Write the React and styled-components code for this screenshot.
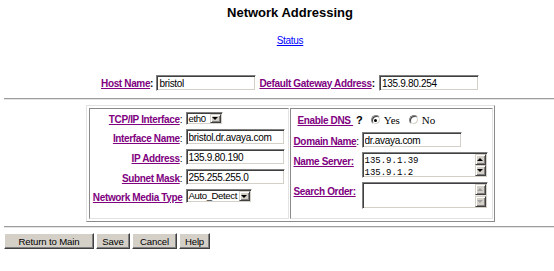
import React from 'react'
import styled, { createGlobalStyle } from 'styled-components'

const GlobalStyle = createGlobalStyle`
  html, body {
    margin: 0;
    padding: 0;
    background: #fff;
    overflow: hidden;
  }
  body {
    font-family: "Liberation Sans", Arial, sans-serif;
    color: #000;
  }
`

const Page = styled.div`
  width: 572px;
  margin-left: 4px;
  padding-top: 5px;
`

const Title = styled.h1`
  margin: 0;
  font-size: 13px;
  line-height: 15px;
  font-weight: bold;
  text-align: center;
`

const StatusLine = styled.div`
  margin-top: 15px;
  text-align: center;
  font-size: 10px;
  letter-spacing: -0.3px;
  line-height: 11px;
`

const BlueLink = styled.a`
  color: #0000ff;
  text-decoration: underline;
  cursor: pointer;
`

const HostRow = styled.div`
  margin-top: 29px;
  display: flex;
  justify-content: center;
  align-items: center;
  height: 16px;
`

const Label = styled.a`
  color: #800080;
  font-weight: bold;
  font-size: 10px;
  letter-spacing: -0.35px;
  text-decoration: underline;
  white-space: pre;
  cursor: pointer;
`

const Colon = styled.span`
  font-size: 10px;
  font-weight: ${props => props.$bold ? 'bold' : 'normal'};
`

const LabelCell = styled.div`
  justify-self: ${props => props.$right ? 'end' : 'start'};
  align-self: ${props => props.$top ? 'start' : 'center'};
  margin-top: ${props => props.$top ? '2px' : '0'};
  line-height: 11px;
  white-space: nowrap;
`

const Rule = styled.div`
  height: 0;
  border-top: 1px solid #9c9c9c;
  border-bottom: 1px solid #e4e4e4;
  margin-top: ${props => props.$top}px;
`

const TextInput = styled.input`
  box-sizing: border-box;
  width: ${props => props.$w}px;
  height: 16px;
  margin: 0 0 0 ${props => props.$ml || 0}px;
  padding: 0 2px;
  border: 1px solid;
  border-color: #808080 #ffffff #ffffff #808080;
  box-shadow: inset 1px 1px 0 #404040, inset -1px -1px 0 #d4d0c8;
  background: #fff;
  font-family: "Liberation Sans", Arial, sans-serif;
  font-size: 10px;
  letter-spacing: -0.3px;
  color: #000;
  outline: none;
`

const Panel = styled.div`
  display: flex;
  gap: 1px;
  width: fit-content;
  margin: 5px auto 0;
  padding: 2px 1px 2px 2px;
  border: 1px solid;
  border-color: #e2e2e2 #8a8a8a #8a8a8a #e2e2e2;
`

const Cell = styled.div`
  box-sizing: border-box;
  width: ${props => props.$w}px;
  height: 111px;
  padding: 3px 0 0 ${props => props.$pl || 0}px;
  border: 1px solid;
  border-color: #8a8a8a #e2e2e2 #e2e2e2 #8a8a8a;
`

const FieldGrid = styled.div`
  display: grid;
  grid-template-columns: ${props => props.$cols};
  grid-template-rows: ${props => props.$rows};
  column-gap: 3px;
  row-gap: 4px;
`

const SelectBox = styled.div`
  box-sizing: border-box;
  display: flex;
  align-items: stretch;
  width: ${props => props.$w}px;
  height: ${props => props.$h}px;
  align-self: center;
  border: 1px solid;
  border-color: #808080 #ffffff #ffffff #808080;
  box-shadow: inset 1px 1px 0 #404040, inset -1px -1px 0 #d4d0c8;
  padding: 1px;
  background: #fff;
`

const SelectText = styled.span`
  flex: 1;
  font-size: 9.6px;
  letter-spacing: -0.4px;
  line-height: ${props => props.$h - 4}px;
  padding-left: 1px;
  white-space: nowrap;
`

const ArrowButton = styled.span`
  box-sizing: border-box;
  width: 11px;
  display: flex;
  align-items: center;
  justify-content: center;
  background: #d4d0c8;
  border: 1px solid;
  border-color: #d4d0c8 #404040 #404040 #d4d0c8;
  box-shadow: inset 1px 1px 0 #ffffff, inset -1px -1px 0 #808080;
  flex: none;
`

const Triangle = styled.span`
  width: 0;
  height: 0;
  border-left: 3px solid transparent;
  border-right: 3px solid transparent;
  ${props => props.$up
    ? `border-bottom: 3px solid ${props.$off ? '#a0a0a0' : '#000'};`
    : `border-top: 3px solid ${props.$off ? '#a0a0a0' : '#000'};`}
`

const DnsRow = styled.div`
  grid-column: 1 / 3;
  display: flex;
  align-items: center;
  padding-left: 4px;
`

const Question = styled.span`
  font-weight: bold;
  font-size: 11px;
  margin-left: 3px;
`

const Radio = styled.span`
  position: relative;
  box-sizing: border-box;
  width: 10px;
  height: 10px;
  margin-left: ${props => props.$ml}px;
  border-radius: 50%;
  border: 1px solid;
  border-color: #808080 #ffffff #ffffff #808080;
  box-shadow: inset 1px 1px 0 #404040, inset -1px -1px 0 #d4d0c8;
  background: #fff;
  &::after {
    content: '';
    display: ${props => props.$on ? 'block' : 'none'};
    position: absolute;
    left: 2.5px;
    top: 2.5px;
    width: 3px;
    height: 3px;
    border-radius: 50%;
    background: #000;
  }
`

const RadioText = styled.span`
  font-family: "Liberation Serif", "Times New Roman", serif;
  font-size: 11px;
  margin-left: 3px;
`

const TextArea = styled.div`
  box-sizing: border-box;
  display: flex;
  width: 126px;
  height: ${props => props.$h}px;
  border: 1px solid;
  border-color: #808080 #ffffff #ffffff #808080;
  box-shadow: inset 1px 1px 0 #404040, inset -1px -1px 0 #d4d0c8;
  padding: 1px;
  background: #fff;
`

const AreaText = styled.div`
  flex: 1;
  padding: 1px 0 0 1px;
  font-family: "Liberation Mono", "Courier New", monospace;
  font-size: 9px;
  line-height: 12px;
  white-space: pre;
`

const ScrollBar = styled.div`
  width: 11px;
  display: flex;
  flex-direction: column;
  justify-content: space-between;
  background: #ece9e4;
`

const ScrollButton = styled(ArrowButton)`
  width: 11px;
  height: 11px;
`

const ButtonRow = styled.div`
  display: flex;
  gap: 2px;
  margin-top: 5px;
`

const Button = styled.button`
  box-sizing: border-box;
  width: ${props => props.$w}px;
  height: 16px;
  padding: 0;
  background: #d4d0c8;
  border: 1px solid;
  border-color: #ffffff #404040 #404040 #ffffff;
  box-shadow: inset -1px -1px 0 #808080;
  font-family: "Liberation Sans", Arial, sans-serif;
  font-size: 9.6px;
  letter-spacing: -0.15px;
  color: #000;
  cursor: pointer;
`

function Select ({ value, width, height }) {
  return (
    <SelectBox $w={width} $h={height}>
      <SelectText $h={height}>{value}</SelectText>
      <ArrowButton><Triangle /></ArrowButton>
    </SelectBox>
  )
}

function ScrollArea ({ lines, height, disabled }) {
  return (
    <TextArea $h={height}>
      <AreaText>{lines.join('\n')}</AreaText>
      <ScrollBar>
        <ScrollButton><Triangle $up $off={disabled} /></ScrollButton>
        <ScrollButton><Triangle $off={disabled} /></ScrollButton>
      </ScrollBar>
    </TextArea>
  )
}

export default function App () {
  return (
    <Page>
      <GlobalStyle />
      <Title>Network Addressing</Title>
      <StatusLine><BlueLink>Status</BlueLink></StatusLine>

      <HostRow>
        <Label>Host Name</Label><Colon $bold>:</Colon>
        <TextInput $w={100} $ml={3} defaultValue="bristol" />
        <Label style={{ marginLeft: 3 }}>Default Gateway Address</Label><Colon $bold>:</Colon>
        <TextInput $w={100} $ml={4} defaultValue="135.9.80.254" />
      </HostRow>

      <Rule $top={7} />

      <Panel>
        <Cell $w={200}>
          <FieldGrid $cols="93px 99px" $rows="13px 16px 16px 16px 14px">
            <LabelCell $right><Label>TCP/IP Interface</Label><Colon>:</Colon></LabelCell>
            <Select value="eth0" width={37} height={13} />
            <LabelCell $right><Label>Interface Name</Label><Colon>:</Colon></LabelCell>
            <TextInput $w={99} defaultValue="bristol.dr.avaya.com" />
            <LabelCell $right><Label>IP Address</Label><Colon>:</Colon></LabelCell>
            <TextInput $w={99} defaultValue="135.9.80.190" />
            <LabelCell $right><Label>Subnet Mask</Label><Colon>:</Colon></LabelCell>
            <TextInput $w={99} defaultValue="255.255.255.0" />
            <LabelCell $right><Label>Network Media Type</Label></LabelCell>
            <Select value="Auto_Detect" width={66} height={14} />
          </FieldGrid>
        </Cell>
        <Cell $w={203} $pl={3}>
          <FieldGrid $cols="65px 126px" $rows="16px 16px 26px 27px">
            <DnsRow>
              <Label>Enable DNS </Label>
              <Question>?</Question>
              <Radio $ml={8} $on />
              <RadioText>Yes</RadioText>
              <Radio $ml={9} />
              <RadioText>No</RadioText>
            </DnsRow>
            <LabelCell><Label>Domain Name</Label><Colon>:</Colon></LabelCell>
            <TextInput $w={100} defaultValue="dr.avaya.com" />
            <LabelCell $top><Label>Name Server:</Label></LabelCell>
            <ScrollArea lines={['135.9.1.39', '135.9.1.2']} height={26} />
            <LabelCell $top><Label>Search Order:</Label></LabelCell>
            <ScrollArea lines={[]} height={27} disabled />
          </FieldGrid>
        </Cell>
      </Panel>

      <Rule $top={4} />

      <ButtonRow>
        <Button $w={90}>Return to Main</Button>
        <Button $w={34}>Save</Button>
        <Button $w={45}>Cancel</Button>
        <Button $w={31}>Help</Button>
      </ButtonRow>
    </Page>
  )
}
